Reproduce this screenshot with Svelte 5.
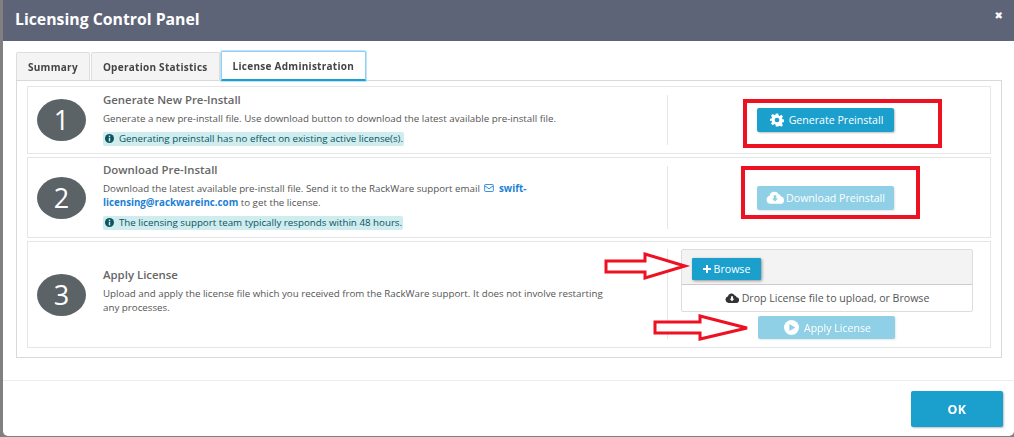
<script>
  let tabs = ["Summary", "Operation Statistics", "License Administration"];
  let active = 2;
</script>

{#snippet cloud(arrow)}
  <svg class="ico-cloud" viewBox="0 0 20 14">
    <path fill="currentColor" d="M5 14a4.6 4.6 0 0 1-1-9 5.4 5.4 0 0 1 10-1.6A3.4 3.4 0 0 1 16.6 6 4 4 0 0 1 15.500 14z" />
    <path fill={arrow} d={"M8.600 4.500h2.800v3.500h2L10 11.500 6.600 8h2z"} />
  </svg>
{/snippet}

{#snippet info()}
  <svg class="ico-info" viewBox="0 0 10 10">
    <circle cx="5" cy="5" r="5" fill="#0c5460" />
    <rect x="4.200" y="1.800" width="1.600" height="1.600" fill="#d1ecf1" />
    <rect x="4.200" y="4.200" width="1.600" height="4" fill="#d1ecf1" />
  </svg>
{/snippet}

<div class="page">
  <div class="modal">
    <header>
      <h1>Licensing Control Panel</h1>
      <span class="close">✖</span>
    </header>

    <div class="body">
      <div class="tabs">
        {#each tabs as tab, i}
          <div class="tab" class:active={i === active}>{tab}</div>
        {/each}
      </div>

      <div class="panel">
        <section class="row row1">
          <div class="step">1</div>
          <div class="text">
            <h2>Generate New Pre-Install</h2>
            <p>Generate a new pre-install file. Use download button to download the latest available pre-install file.</p>
            <span class="note">{@render info()}Generating preinstall has no effect on existing active license(s).</span>
          </div>
          <div class="actions">
            <button class="btn wide">
              <svg class="ico-gear" viewBox="0 0 24 24"><path fill="#fff" fill-rule="evenodd" d="M10 1h4l.7 3.200 1.900.8 2.800-1.800 2.800 2.800-1.800 2.800.8 1.900 3.200.7v4l-3.200.7-.8 1.900 1.800 2.800-2.800 2.800-2.800-1.800-1.900.8L14 23h-4l-.7-3.200-1.900-.8-2.800 1.800-2.800-2.800 1.800-2.800-.8-1.900L-.4 14v-4l3.200-.7.8-1.900L1.800 4.600l2.800-2.800 2.800 1.800 1.900-.8zM12 8a4 4 0 1 0 0 8 4 4 0 0 0 0-8z" /></svg>
              Generate Preinstall
            </button>
          </div>
        </section>

        <section class="row row2">
          <div class="step">2</div>
          <div class="text">
            <h2>Download Pre-Install</h2>
            <p>
              Download the latest available pre-install file. Send it to the RackWare support email
              <svg class="ico-mail" viewBox="0 0 12 10"><rect x=".6" y=".6" width="10.800" height="8.800" rx="1" fill="none" stroke="#1b7fd6" stroke-width="1.100" /><path d="M1 2.500 6 6l5-3.500" fill="none" stroke="#1b7fd6" stroke-width="1.100" /></svg>
              <a href="#top">swift-<br />licensing@rackwareinc.com</a> to get the license.
            </p>
            <span class="note">{@render info()}The licensing support team typically responds within 48 hours.</span>
          </div>
          <div class="actions">
            <button class="btn wide off dl">
              {@render cloud("#8fd0e6")}
              Download Preinstall
            </button>
          </div>
        </section>

        <section class="row row3">
          <div class="step">3</div>
          <div class="text">
            <h2>Apply License</h2>
            <p>Upload and apply the license file which you received from the RackWare support. It does not involve restarting any processes.</p>
          </div>
          <div class="actions upload">
            <div class="drop">
              <div class="drop-bar">
                <button class="btn browse">
                  <svg class="ico-plus" viewBox="0 0 8 8"><path fill="#fff" d="M3 0h2v3h3v2H5v3H3V5H0V3h3z" /></svg>
                  Browse
                </button>
              </div>
              <div class="drop-hint">
                <span class="hint-cloud">{@render cloud("#fff")}</span>
                Drop License file to upload, or Browse
              </div>
            </div>
            <button class="btn wide off apply">
              <svg class="ico-play" viewBox="0 0 14 14"><circle cx="7" cy="7" r="7" fill="#fff" /><path d="M5 3.800 10.500 7 5 10.200z" fill="#8fd0e6" /></svg>
              Apply License
            </button>
          </div>
        </section>
      </div>
    </div>

    <footer>
      <button class="btn ok">OK</button>
    </footer>
  </div>

  <!-- annotations drawn on top of the screenshot -->
  <div class="mark mark1"></div>
  <div class="mark mark2"></div>
  <svg class="arrows" viewBox="0 0 1014 437">
    <path d="M606 261H645V254L685 266 645 278V272H606z" />
    <path d="M655 322H700V316L747 328 700 339V333H655z" />
  </svg>
</div>

<style>
  :global(body) {
    margin: 0;
    background: #808080;
  }

  .page {
    position: relative;
    width: 1014px;
    height: 437px;
    padding-left: 3px;
    box-sizing: border-box;
    overflow: hidden;
    font-family: "Open Sans", "Liberation Sans", sans-serif;
    color: #666;
    filter: blur(0.4px);
  }

  .modal {
    height: 436px;
    display: flex;
    flex-direction: column;
    background: #fff;
    border-bottom-left-radius: 5px;
    border-bottom-right-radius: 5px;
  }

  header {
    flex: none;
    height: 41px;
    box-sizing: border-box;
    display: flex;
    align-items: center;
    justify-content: space-between;
    padding: 0 11px 3px 12px;
    background: #5d6478;
    color: #fff;
  }

  h1 {
    margin: 0;
    font-size: 15.8px;
    font-weight: 700;
  }

  .close {
    margin-top: -7px;
    font-size: 10px;
    font-family: "DejaVu Sans", sans-serif;
  }

  .body {
    flex: none;
    height: 340px;
    box-sizing: border-box;
    padding: 11px 12px 0 13px;
    border-bottom: 1px solid #eceef1;
  }

  .tabs {
    display: flex;
    gap: 1px;
    height: 28px;
    position: relative;
    z-index: 1;
  }

  .tab {
    box-sizing: border-box;
    height: 28px;
    padding: 0 11px;
    display: flex;
    align-items: center;
    font-size: 10px;
    font-weight: 700;
    letter-spacing: 0.27px;
    color: #444;
    background: #f4f4f4;
    border: 1px solid #ddd;
    border-bottom: none;
    border-radius: 2px 2px 0 0;
  }

  .tab.active {
    height: 30px;
    margin-top: -1px;
    background: #fff;
    border: 1px solid #8fd0f5;
    box-shadow: 0 0 0 1px #bfe4fa;
    border-bottom: 2px solid #1b9fcd;
  }

  .panel {
    height: 278px;
    box-sizing: border-box;
    padding: 5px 10px 0;
    border: 1px solid #d9d9d9;
    display: flex;
    flex-direction: column;
    gap: 3px;
  }

  .row {
    box-sizing: border-box;
    display: grid;
    grid-template-columns: 75px 1fr 323px;
    border: 1px solid #e6e6e6;
  }

  .row1 { height: 68px; }
  .row2 { height: 81px; }
  .row3 { height: 107px; }

  .step {
    width: 49px;
    height: 42px;
    margin: 0 0 0 9px;
    align-self: center;
    border-radius: 50%;
    background: #5b6367;
    color: #fff;
    font-size: 27px;
    line-height: 42px;
    text-align: center;
  }

  .text {
    align-self: center;
    min-width: 0;
    padding-right: 40px;
  }

  .row2 .text {
    padding-bottom: 1px;
  }

  .row3 .text {
    padding: 0 60px 7px 0;
  }

  h2 {
    margin: 0 0 5px;
    font-size: 11.4px;
    font-weight: 600;
    color: #666;
  }

  p {
    margin: 0;
    font-size: 9.75px;
    line-height: 14px;
    color: #555;
  }

  a {
    color: #1b7fd6;
    font-weight: 700;
    text-decoration: none;
  }

  .note {
    display: inline-flex;
    align-items: center;
    gap: 5px;
    margin-top: 4px;
    height: 14px;
    padding: 0 1px 0 2px;
    border-radius: 2px;
    background: #cfecef;
    color: #0c5460;
    font-size: 9.75px;
  }

  .ico-info { width: 9px; height: 9px; }
  .ico-mail { width: 10px; height: 8px; margin: 0 2px; }

  .actions {
    display: flex;
    align-items: center;
    justify-content: center;
    margin: 8px 0;
    padding-right: 7px;
    border-left: 1px solid #e6e6e6;
  }

  .btn {
    box-sizing: border-box;
    display: inline-flex;
    align-items: center;
    justify-content: center;
    gap: 5px;
    padding: 0;
    border: none;
    border-radius: 2px;
    background: #1b9fcd;
    color: #fff;
    font-family: inherit;
    font-size: 10.6px;
    font-weight: 400;
    box-shadow: 1px 1px 2px rgba(0, 0, 0, 0.25);
  }

  .wide {
    width: 137px;
    height: 24px;
  }

  .off {
    background: #8fd0e6;
    box-shadow: 1px 1px 2px rgba(0, 0, 0, 0.1);
  }

  .dl { gap: 2px; }

  .ico-gear { width: 14px; height: 14px; margin-left: 2px; }
  .ico-cloud { width: 18px; height: 13px; color: #fff; }
  .ico-plus { width: 8px; height: 8px; }
  .ico-play { width: 15px; height: 15px; margin-left: 2px; }

  .upload {
    flex-direction: column;
    justify-content: flex-start;
    align-items: flex-start;
    margin-top: 7px;
    padding-left: 13px;
  }

  .drop {
    width: 292px;
    height: 63px;
    box-sizing: border-box;
    border: 1px solid #ddd;
    border-radius: 2px;
  }

  .drop-bar {
    height: 35px;
    box-sizing: border-box;
    padding: 6px 10px;
    background: #f3f3f3;
    border-bottom: 1px solid #ccc;
  }

  .browse {
    width: 69px;
    height: 22px;
    border-radius: 1px;
    gap: 3px;
    box-shadow: 1px 1px 3px rgba(0, 0, 0, 0.4);
  }

  .drop-hint {
    height: 25px;
    display: flex;
    align-items: center;
    justify-content: center;
    gap: 3px;
    font-size: 10.6px;
    color: #555;
  }

  .hint-cloud { display: flex; }
  .hint-cloud :global(.ico-cloud) { color: #333; width: 14px; height: 10px; }

  .apply {
    margin: 4px 0 0 77px;
    height: 23px;
  }

  footer {
    flex: 1;
    display: flex;
    justify-content: flex-end;
    align-items: flex-start;
    padding: 10px 11px 0 0;
  }

  .ok {
    width: 92px;
    height: 36px;
    font-size: 12.5px;
    font-weight: 700;
    letter-spacing: 0.5px;
  }

  .mark {
    position: absolute;
    box-sizing: border-box;
    border: 4px solid #ee1122;
  }

  .mark1 { left: 743px; top: 99px; width: 199px; height: 49px; }
  .mark2 { left: 741px; top: 166px; width: 179px; height: 53px; }

  .arrows {
    position: absolute;
    left: 0;
    top: 0;
    width: 1014px;
    height: 437px;
    pointer-events: none;
  }

  .arrows path {
    fill: #fff;
    stroke: #ee1122;
    stroke-width: 3;
  }
</style>
